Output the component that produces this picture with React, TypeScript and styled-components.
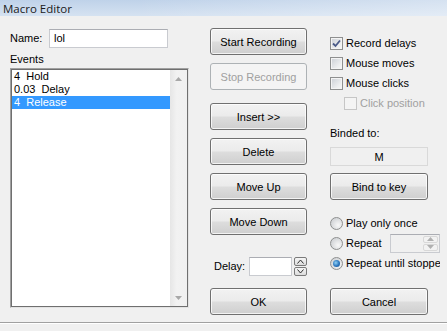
import React from "react";
import styled, { createGlobalStyle } from "styled-components";

const GlobalStyle = createGlobalStyle`
  html, body {
    margin: 0;
    padding: 0;
    background: #f0f0f0;
  }
  body {
    font-family: "Liberation Sans", Arial, sans-serif;
    font-size: 11px;
    color: #000;
  }
`;

const Window = styled.div`
  width: 447px;
  height: 331px;
  overflow: hidden;
  display: flex;
  flex-direction: column;
  background: #f0f0f0;
`;

const TitleBar = styled.div`
  flex: none;
  height: 16px;
  padding-left: 3px;
  display: flex;
  align-items: center;
  background: linear-gradient(to right, rgba(255, 255, 255, 0) 30%, rgba(255, 255, 255, 0.35)),
    linear-gradient(#bfd2e9, #d5e2f1);
  font-family: "Open Sans", "Noto Sans", sans-serif;
  font-size: 11.5px;
  color: #1a1a1a;
`;

const Body = styled.div`
  flex: 1;
  display: flex;
  padding: 12px 0 0 10px;
  border-bottom: 1px solid #a0a0a0;
  box-sizing: border-box;
`;

const Footer = styled.div`
  flex: none;
  height: 8px;
  background: #f0f0f0;
  box-shadow: inset 0 1px 0 #ffffff;
`;

const Column = styled.div<{ $width: number; $gap?: number }>`
  width: ${(p) => p.$width}px;
  margin-left: ${(p) => p.$gap ?? 0}px;
  flex: none;
  display: flex;
  flex-direction: column;
  overflow: hidden;
  white-space: nowrap;
`;

const NameRow = styled.div`
  display: flex;
  align-items: center;
  height: 20px;
`;

const Label = styled.span<{ $top?: number; $width?: number; $disabled?: boolean }>`
  display: block;
  line-height: 13px;
  margin-top: ${(p) => p.$top ?? 0}px;
  width: ${(p) => (p.$width ? `${p.$width}px` : "auto")};
  flex: none;
  color: ${(p) => (p.$disabled ? "#a0a0a0" : "#000")};
`;

const TextBox = styled.div<{ $width: number; $height?: number; $disabled?: boolean }>`
  width: ${(p) => p.$width}px;
  height: ${(p) => p.$height ?? 19}px;
  box-sizing: border-box;
  border: 1px solid #c9cbd0;
  border-top-color: #abadb3;
  background: ${(p) => (p.$disabled ? "#f0f0f0" : "#ffffff")};
  padding-left: 4px;
  display: flex;
  align-items: center;
  position: relative;
`;

const ListFrame = styled.div`
  margin-top: 2px;
  height: 240px;
  box-sizing: border-box;
  border: 1px solid;
  border-color: #a0a0a0 #e3e3e3 #e3e3e3 #a0a0a0;
  display: flex;
`;

const ListInner = styled.div`
  flex: 1;
  display: flex;
  border: 1px solid #6f6f6f;
  background: #fff;
`;

const Items = styled.div`
  flex: 1;
  display: flex;
  flex-direction: column;
`;

const Item = styled.div<{ $selected?: boolean }>`
  height: 13px;
  line-height: 13px;
  padding-left: 2px;
  white-space: pre;
  background: ${(p) => (p.$selected ? "#3399ff" : "transparent")};
  color: ${(p) => (p.$selected ? "#fff" : "#000")};
`;

const ScrollBar = styled.div`
  width: 17px;
  flex: none;
  display: flex;
  flex-direction: column;
  justify-content: space-between;
  background: linear-gradient(to right, #e6e6e6, #f2f2f2 40%, #f0f0f0);
`;

const ScrollArrow = styled.div`
  height: 17px;
  display: flex;
  align-items: center;
  justify-content: center;
`;

const Button = styled.div<{ $top?: number; $width?: number; $disabled?: boolean }>`
  margin-top: ${(p) => p.$top ?? 0}px;
  width: ${(p) => p.$width ?? 97}px;
  height: 27px;
  flex: none;
  box-sizing: border-box;
  border: 1px solid ${(p) => (p.$disabled ? "#adb2b5" : "#707070")};
  border-radius: 3px;
  background: ${(p) =>
    p.$disabled
      ? "#f4f4f4"
      : "linear-gradient(#f2f2f2 0%, #ebebeb 48%, #dddddd 52%, #cfcfcf 100%)"};
  box-shadow: inset 0 0 0 1px ${(p) => (p.$disabled ? "#f4f4f4" : "rgba(255,255,255,0.75)")};
  color: ${(p) => (p.$disabled ? "#a0a0a0" : "#000")};
  display: flex;
  align-items: center;
  justify-content: center;
`;

const DelayRow = styled.div`
  margin-top: 22px;
  height: 19px;
  display: flex;
  align-items: center;
  padding-left: 4px;
`;

const SpinPair = styled.div`
  margin-left: 2px;
  display: flex;
  flex-direction: column;
  gap: 1px;
`;

const SpinKey = styled.div`
  width: 13px;
  height: 9px;
  box-sizing: border-box;
  border: 1px solid #7a7a7a;
  border-radius: 2px;
  background: linear-gradient(#f5f5f5, #dcdcdc);
  display: flex;
  align-items: center;
  justify-content: center;
`;

const InnerSpin = styled.div`
  position: absolute;
  right: 1px;
  top: 1px;
  bottom: 1px;
  width: 15px;
  display: flex;
  flex-direction: column;
  gap: 1px;
`;

const InnerSpinHalf = styled.div`
  flex: 1;
  border: 1px solid #d8d8d8;
  border-radius: 2px;
  background: #f2f2f2;
  display: flex;
  align-items: center;
  justify-content: center;
`;

const OptionRow = styled.div<{ $top?: number; $indent?: number }>`
  margin-top: ${(p) => p.$top ?? 0}px;
  padding-left: ${(p) => p.$indent ?? 0}px;
  height: 20px;
  display: flex;
  align-items: center;
  gap: 3px;
`;

const CheckBox = styled.span<{ $disabled?: boolean }>`
  width: 13px;
  height: 13px;
  flex: none;
  box-sizing: border-box;
  border: 1px solid ${(p) => (p.$disabled ? "#c6c6c6" : "#8e8f8f")};
  background: ${(p) =>
    p.$disabled ? "#f4f4f4" : "linear-gradient(135deg, #cbcfd5, #eeeff0 70%, #f6f6f6)"};
  box-shadow: inset 0 0 0 1px ${(p) => (p.$disabled ? "#f4f4f4" : "#f4f4f4")};
  display: flex;
  align-items: center;
  justify-content: center;
`;

const Radio = styled.span<{ $checked?: boolean }>`
  width: 13px;
  height: 13px;
  flex: none;
  box-sizing: border-box;
  border-radius: 50%;
  border: 1px solid #8e8f8f;
  background: radial-gradient(circle at 65% 65%, #f8f8f8, #d4d6d9 70%);
  display: flex;
  align-items: center;
  justify-content: center;
  &::after {
    content: "";
    display: ${(p) => (p.$checked ? "block" : "none")};
    width: 7px;
    height: 7px;
    border-radius: 50%;
    background: radial-gradient(circle at 40% 40%, #8fd0f5, #2a75bd 55%, #174f8e);
  }
`;

const KeyField = styled.div`
  margin-top: 7px;
  width: 98px;
  height: 19px;
  box-sizing: border-box;
  border: 1px solid #d9d9d9;
  background: #f0f0f0;
  display: flex;
  align-items: center;
  justify-content: center;
`;

const Check = () => (
  <svg width="9" height="9" viewBox="0 0 9 9">
    <path d="M1 4.5 L3.5 7 L8 1.5" fill="none" stroke="#4a5a88" strokeWidth="1.8" />
  </svg>
);

const Tri = ({ up, color }: { up?: boolean; color: string }) => (
  <svg width="7" height="4" viewBox="0 0 7 4">
    <path d={up ? "M0 4 L3.5 0 L7 4 Z" : "M0 0 L3.5 4 L7 0 Z"} fill={color} />
  </svg>
);

const Chevron = ({ up }: { up?: boolean }) => (
  <svg width="7" height="5" viewBox="0 0 7 5">
    <path
      d={up ? "M0.5 4.5 L3.5 1 L6.5 4.5" : "M0.5 0.5 L3.5 4 L6.5 0.5"}
      fill="none"
      stroke="#303030"
      strokeWidth="1"
    />
  </svg>
);

const events = [
  { text: "4  Hold" },
  { text: "0.03  Delay" },
  { text: "4  Release", selected: true },
];

export default function App() {
  return (
    <Window>
      <GlobalStyle />
      <TitleBar>Macro Editor</TitleBar>
      <Body>
        <Column $width={179}>
          <NameRow>
            <Label $width={39}>Name:</Label>
            <TextBox $width={119}>lol</TextBox>
          </NameRow>
          <Label $top={5}>Events</Label>
          <ListFrame>
            <ListInner>
              <Items>
                {events.map((e) => (
                  <Item key={e.text} $selected={e.selected}>
                    {e.text}
                  </Item>
                ))}
              </Items>
              <ScrollBar>
                <ScrollArrow>
                  <Tri up color="#a8a8a8" />
                </ScrollArrow>
                <ScrollArrow>
                  <Tri color="#a8a8a8" />
                </ScrollArrow>
              </ScrollBar>
            </ListInner>
          </ListFrame>
        </Column>

        <Column $width={97} $gap={21}>
          <Button>Start Recording</Button>
          <Button $top={8} $disabled>
            Stop Recording
          </Button>
          <Button $top={13}>Insert &gt;&gt;</Button>
          <Button $top={8}>Delete</Button>
          <Button $top={8}>Move Up</Button>
          <Button $top={8}>Move Down</Button>
          <DelayRow>
            <Label $width={35}>Delay:</Label>
            <TextBox $width={45} />
            <SpinPair>
              <SpinKey>
                <Chevron up />
              </SpinKey>
              <SpinKey>
                <Chevron />
              </SpinKey>
            </SpinPair>
          </DelayRow>
          <Button $top={12}>OK</Button>
        </Column>

        <Column $width={110} $gap={23}>
          <OptionRow $top={5}>
            <CheckBox>
              <Check />
            </CheckBox>
            <span>Record delays</span>
          </OptionRow>
          <OptionRow>
            <CheckBox />
            <span>Mouse moves</span>
          </OptionRow>
          <OptionRow>
            <CheckBox />
            <span>Mouse clicks</span>
          </OptionRow>
          <OptionRow $indent={14}>
            <CheckBox $disabled />
            <Label $disabled>Click position</Label>
          </OptionRow>
          <Label $top={14}>Binded to:</Label>
          <KeyField>M</KeyField>
          <Button $top={7} $width={98}>
            Bind to key
          </Button>
          <OptionRow $top={13}>
            <Radio />
            <span>Play only once</span>
          </OptionRow>
          <OptionRow>
            <Radio />
            <span style={{ width: 41 }}>Repeat</span>
            <TextBox $width={50} $disabled>
              <InnerSpin>
                <InnerSpinHalf>
                  <Tri up color="#b0b0b0" />
                </InnerSpinHalf>
                <InnerSpinHalf>
                  <Tri color="#b0b0b0" />
                </InnerSpinHalf>
              </InnerSpin>
            </TextBox>
          </OptionRow>
          <OptionRow>
            <Radio $checked />
            <span>Repeat until stopped</span>
          </OptionRow>
          <Button $top={15} $width={98}>
            Cancel
          </Button>
        </Column>
      </Body>
      <Footer />
    </Window>
  );
}
